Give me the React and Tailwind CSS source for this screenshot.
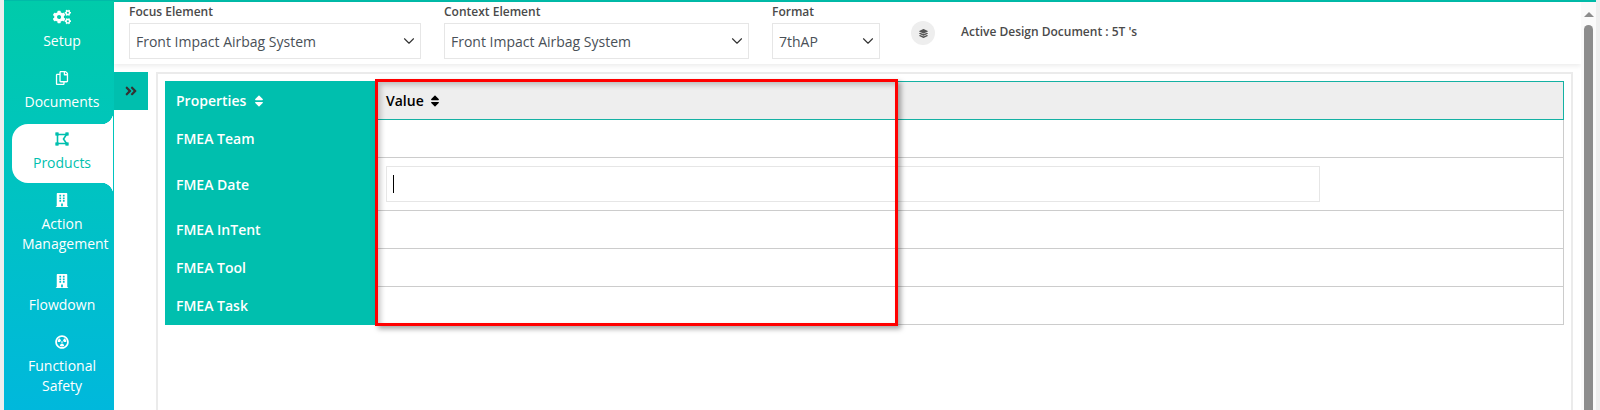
import { ChevronDown } from "lucide-react";
import {
  FaAngleDoubleRight,
  FaBuilding,
  FaCogs,
  FaLayerGroup,
  FaRadiationAlt,
  FaRegCopy,
  FaSort,
} from "react-icons/fa";

function ProductsIcon() {
  return (
    <svg width="14" height="14" viewBox="0 0 14 14" fill="none" stroke="currentColor" strokeWidth="1.6">
      <path d="M2.5 2.5H11.5L8.5 7L11.5 11.5H2.5Z" />
      <rect x="0.8" y="0.8" width="2.4" height="2.4" fill="currentColor" strokeWidth="0.8" />
      <rect x="10.8" y="0.8" width="2.4" height="2.4" fill="currentColor" strokeWidth="0.8" />
      <rect x="0.8" y="10.8" width="2.4" height="2.4" fill="currentColor" strokeWidth="0.8" />
      <rect x="10.8" y="10.8" width="2.4" height="2.4" fill="currentColor" strokeWidth="0.8" />
    </svg>
  );
}

const navItems = [
  { label: "Setup", icon: <FaCogs size={18} /> },
  { label: "Documents", icon: <FaRegCopy size={14} /> },
  { label: "Products", icon: <ProductsIcon />, active: true },
  { label: "Action Management", icon: <FaBuilding size={14} /> },
  { label: "Flowdown", icon: <FaBuilding size={14} /> },
  { label: "Functional Safety", icon: <FaRadiationAlt size={14} /> },
];

function NavItem({ item }) {
  return (
    <div
      className={
        "relative ml-2 mr-px pl-[10px] pr-[11px] text-center text-[14px] leading-5 " +
        (item.active
          ? "my-px pt-[7px] pb-[10px] bg-white rounded-l-[16px] text-[#00bfae]"
          : "pt-2 pb-[11px] text-white")
      }
    >
      {item.active && (
        <>
          <span className="absolute -top-3 right-0 w-3 h-3 bg-[radial-gradient(circle_at_0_0,transparent_12px,white_12.5px)]" />
          <span className="absolute -bottom-3 right-0 w-3 h-3 bg-[radial-gradient(circle_at_0_100%,transparent_12px,white_12.5px)]" />
        </>
      )}
      <div className="h-4 mb-[6px] flex items-center justify-center">{item.icon}</div>
      <div>{item.label}</div>
    </div>
  );
}

function Select({ label, value, width }) {
  return (
    <div className={width}>
      <div className="text-[12px] leading-[16px] font-semibold text-[#4a4a4a] h-[21px] pt-[2px]">{label}</div>
      <div className="h-[36px] border border-[#e6e6e6] pl-[6px] pr-[2px] flex items-center justify-between text-[14px] text-[#495057]">
        <span>{value}</span>
        <ChevronDown size={18} strokeWidth={1.5} className="text-[#333]" />
      </div>
    </div>
  );
}

const rows = [
  { label: "FMEA Team", h: "h-[38px]", shift: "pb-[2px]" },
  { label: "FMEA Date", h: "h-[53px]", input: true, shift: "" },
  { label: "FMEA InTent", h: "h-[38px]", shift: "pb-[2px]" },
  { label: "FMEA Tool", h: "h-[38px]", shift: "pb-[2px]" },
  { label: "FMEA Task", h: "h-[38px]", shift: "pb-[2px]" },
];

function PropertiesTable() {
  return (
    <div className="relative">
      <div className="flex h-[39px]">
        <div className="w-[210px] bg-[#00bfae] pl-[11px] flex items-center gap-[6px] text-[14px] font-semibold text-white">
          Properties <FaSort size={14} />
        </div>
        <div className="flex-1 bg-[#eeeeee] border border-[#14b1a3] pl-[10px] flex items-center gap-[4px] text-[14px] font-semibold text-black">
          Value <FaSort size={14} />
        </div>
      </div>
      {rows.map((row) => (
        <div key={row.label} className={"flex " + row.h}>
          <div className={"w-[210px] bg-[#00bfae] pl-[11px] flex items-center text-[14px] font-semibold text-white " + row.shift}>
            {row.label}
          </div>
          <div className="flex-1 border-r border-b border-[#cccccc] pl-[11px] flex items-center">
            {row.input && (
              <div className="w-[934px] h-[36px] border border-[#e6e6e6] pl-[6px] flex items-center">
                <div className="w-px h-[18px] bg-black" />
              </div>
            )}
          </div>
        </div>
      ))}
      {/* highlight box drawn over the table */}
      <div className="absolute left-[210px] -top-[2px] w-[523px] h-[247px] border-[3px] border-[#ff0000] pointer-events-none shadow-[3px_3px_5px_rgba(0,0,0,0.35),inset_3px_3px_5px_rgba(0,0,0,0.2)]" />
    </div>
  );
}

export default function App() {
  return (
    <div className="h-[410px] overflow-hidden flex bg-white font-['Open_Sans',sans-serif]">
      <div className="w-1 bg-[#eeeeee] shrink-0" />
      <div className="flex-1 min-w-0 flex flex-col">
        <div className="h-[2px] bg-[#00bba8] shrink-0" />
        <div className="flex-1 min-h-0 flex">
          <div className="w-[110px] shrink-0 bg-gradient-to-b from-[#00cbaa] to-[#00b8dc] -mt-px">
            {navItems.map((item) => (
              <NavItem key={item.label} item={item} />
            ))}
          </div>
          <div className="flex-1 min-w-0 flex flex-col">
            <div className="h-[62px] shrink-0 flex pl-[15px] gap-[23px] shadow-[0_2px_5px_rgba(0,0,0,0.08)]">
              <Select label="Focus Element" value="Front Impact Airbag System" width="w-[292px]" />
              <Select label="Context Element" value="Front Impact Airbag System" width="w-[305px]" />
              <Select label="Format" value="7thAP" width="w-[108px]" />
              <div className="ml-[8px] h-[62px] flex items-center">
                <div className="w-6 h-6 rounded-full bg-[#eeeeee] flex items-center justify-center text-[#555]">
                  <FaLayerGroup size={9} />
                </div>
                <div className="ml-[26px] mb-[2px] text-[12px] font-semibold text-[#4a4a4a]">
                  Active Design Document : 5T 's
                </div>
              </div>
            </div>
            <div className="flex-1 min-h-0 flex items-start pt-2">
              <div className="w-[34px] h-[38px] shrink-0 bg-[#00bfae] flex items-center justify-center text-[#333]">
                <FaAngleDoubleRight size={14} />
              </div>
              <div className="flex-1 ml-2 mr-2 h-[400px] border-2 border-b-0 border-[#ebebeb] pl-[7px] pr-[7px] pt-[7px]">
                <PropertiesTable />
              </div>
            </div>
          </div>
          <div className="w-[15px] shrink-0 bg-[#fafafa] flex flex-col items-center pt-[10px]">
            <div className="w-0 h-0 border-x-[5px] border-x-transparent border-b-[5px] border-b-[#8c8c8c]" />
            <div className="mt-2 w-[9px] flex-1 bg-[#8c8c8c] rounded-t-[5px]" />
          </div>
        </div>
      </div>
      <div className="w-1 bg-[#eeeeee] shrink-0" />
    </div>
  );
}
